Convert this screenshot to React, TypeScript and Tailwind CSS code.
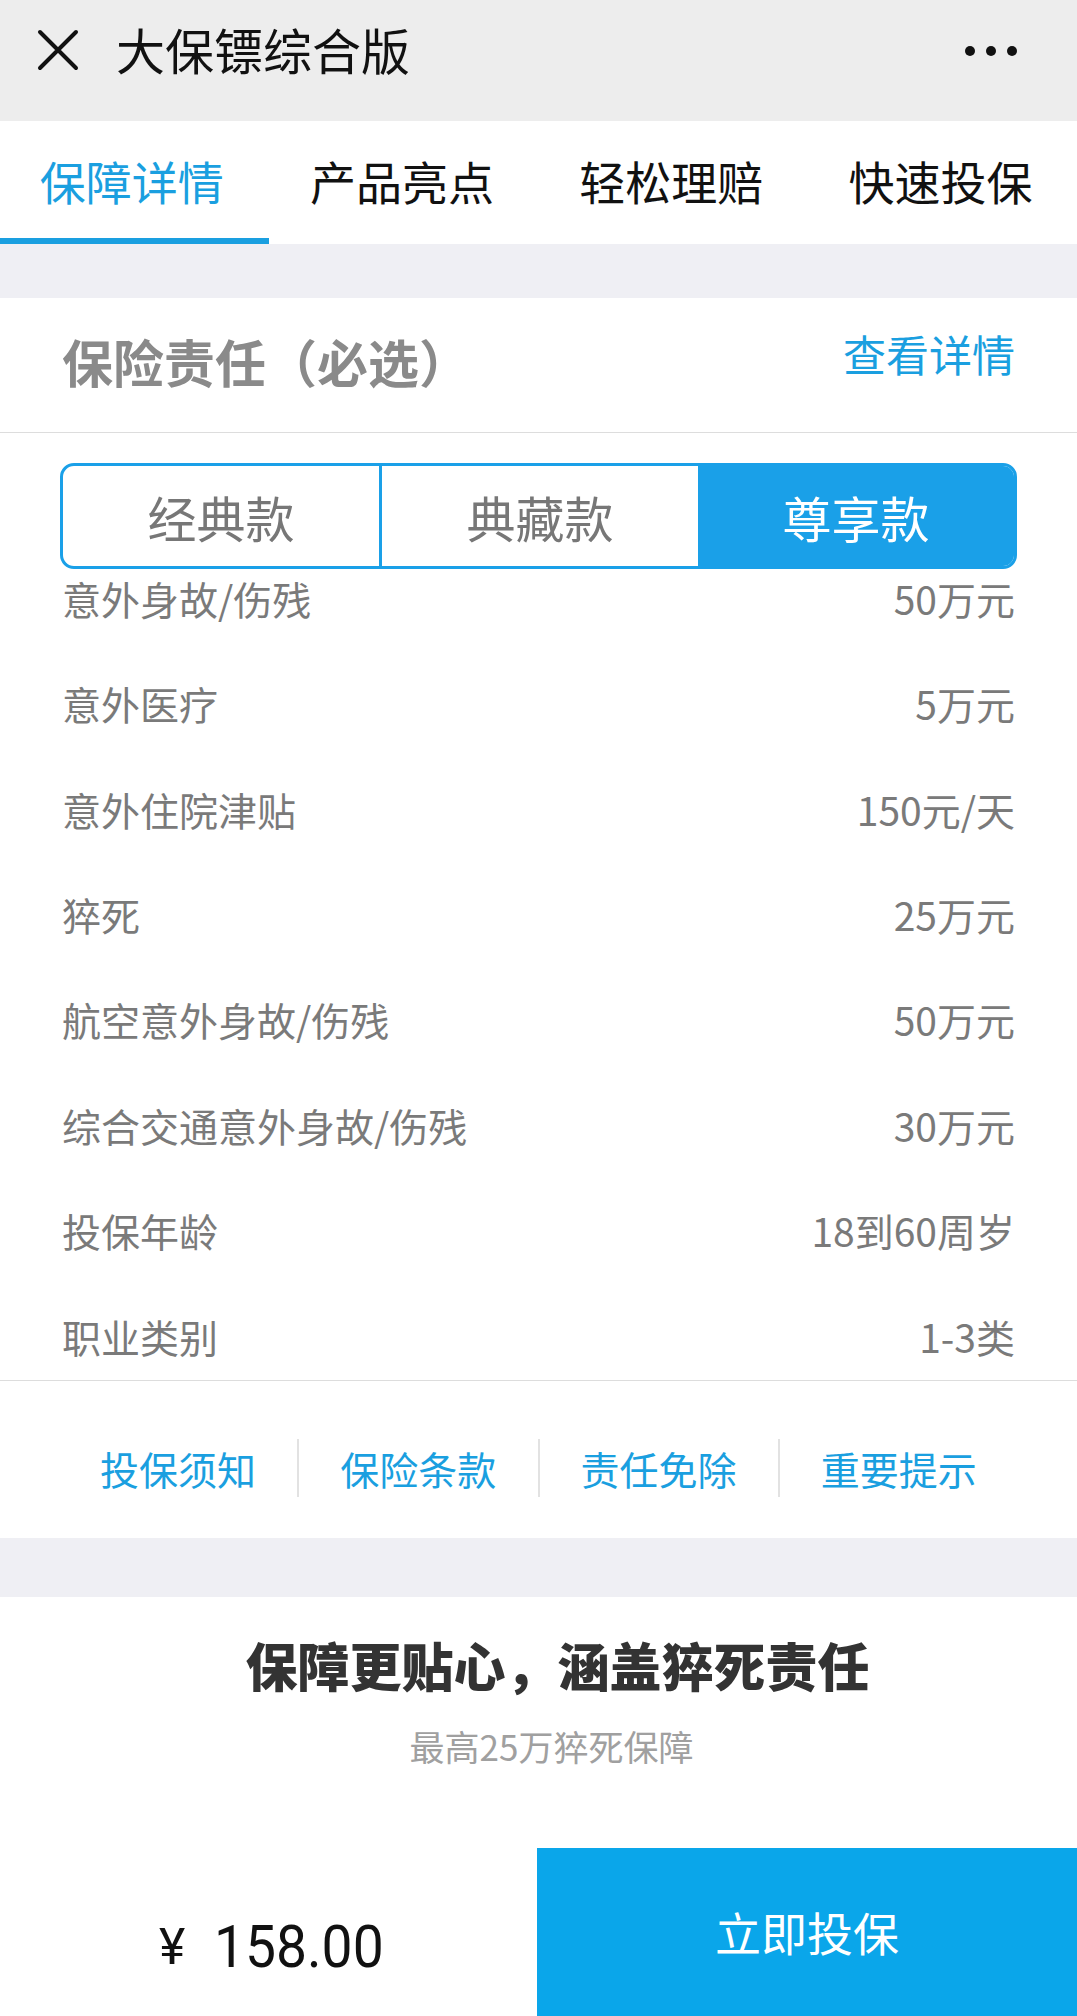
import React from "react";

const rows: [string, string][] = [
  ["意外身故/伤残", "50万元"],
  ["意外医疗", "5万元"],
  ["意外住院津贴", "150元/天"],
  ["猝死", "25万元"],
  ["航空意外身故/伤残", "50万元"],
  ["综合交通意外身故/伤残", "30万元"],
  ["投保年龄", "18到60周岁"],
  ["职业类别", "1-3类"],
];

const tabs = ["保障详情", "产品亮点", "轻松理赔", "快速投保"];
const links = ["投保须知", "保险条款", "责任免除", "重要提示"];

export default function App() {
  return (
    <div
      className="w-[1077px] h-[2016px] bg-white flex flex-col overflow-hidden"
      style={{ fontFamily: '"Noto Sans CJK SC", "Noto Sans", sans-serif' }}
    >
      {/* Header */}
      <div className="h-[121px] bg-[#ededed] flex items-start pl-[37px] pr-[60px]">
        <svg width="42" height="42" viewBox="0 0 42 42" className="shrink-0 mt-[29px]">
          <path d="M3 3 L39 39 M39 3 L3 39" stroke="#111" strokeWidth="4" strokeLinecap="round" />
        </svg>
        <div className="ml-[37px] mt-[24px] text-[49px] leading-none text-[#111]">大保镖综合版</div>
        <div className="ml-auto mt-[46px] flex items-center gap-[11px]">
          <span className="w-[10px] h-[10px] rounded-full bg-[#111]" />
          <span className="w-[10px] h-[10px] rounded-full bg-[#111]" />
          <span className="w-[10px] h-[10px] rounded-full bg-[#111]" />
        </div>
      </div>

      {/* Tabs */}
      <div className="h-[123px] bg-white flex">
        {tabs.map((t, i) => (
          <div key={t} className="flex-1 flex flex-col">
            <div
              className={`flex-1 flex items-center justify-center text-[46px] leading-none pt-[2px] ${
                i === 0 ? "text-[#1a9fe0]" : "text-[#111]"
              }`}
            >
              <span className={i === 0 ? "-ml-[6px]" : "-ml-[4px]"}>{t}</span>
            </div>
            <div className={`h-[6px] ${i === 0 ? "bg-[#1a9fe0]" : "bg-transparent"}`} />
          </div>
        ))}
      </div>

      {/* Gap */}
      <div className="h-[54px] bg-[#efeff4]" />

      {/* Card header */}
      <div className="h-[136px] flex items-center justify-between px-[62px] border-b border-[#dddddd]">
        <div className="text-[51px] font-bold text-[#8a8a8a] leading-none -mt-[6px]">保险责任（必选）</div>
        <div className="text-[43px] text-[#1a9fe0] leading-none -mt-[22px]">查看详情</div>
      </div>

      {/* Segment */}
      <div className="px-[60px] pt-[30px]">
        <div className="h-[106px] flex border-[3px] border-[#1aa0e8] rounded-[14px] overflow-hidden">
          <div className="flex-1 flex items-center justify-center text-[49px] text-[#777] border-r-[3px] border-[#1aa0e8]">经典款</div>
          <div className="flex-1 flex items-center justify-center text-[49px] text-[#777]">典藏款</div>
          <div className="flex-1 flex items-center justify-center text-[49px] text-white bg-[#1aa0e8]">尊享款</div>
        </div>
      </div>

      {/* Rows */}
      <div className="px-[62px] flex flex-col gap-[47.4px] pb-[15px] border-b border-[#dddddd]">
        {rows.map(([k, v]) => (
          <div key={k} className="h-[58px] flex items-center justify-between text-[39px] text-[#7a7a7a] leading-none">
            <span>{k}</span>
            <span>{v}</span>
          </div>
        ))}
      </div>

      {/* Links */}
      <div className="h-[157px] px-[59px] pt-[18px] flex items-center">
        {links.map((l, i) => (
          <div
            key={l}
            className={`flex-1 flex items-center justify-center h-[58px] text-[39px] text-[#1a9fe0] leading-none ${
              i > 0 ? "border-l-2 border-[#e2e2e2]" : ""
            }`}
          >
            {l}
          </div>
        ))}
      </div>

      {/* Gap */}
      <div className="h-[59px] bg-[#efeff4]" />

      {/* Highlight */}
      <div className="h-[252px] flex flex-col items-center">
        <div className="mt-[42px] pl-[38px] text-[52px] font-black text-[#333] leading-none">保障更贴心，涵盖猝死责任</div>
        <div className="mt-[37px] pl-[26px] text-[35px] text-[#a0a0a0] leading-none">最高25万猝死保障</div>
      </div>

      {/* Bottom bar */}
      <div className="h-[168px] flex">
        <div
          className="w-[537px] flex items-center pl-[159px] pt-[30px] text-[#111] leading-none"
          style={{ fontFamily: '"Roboto", "Liberation Sans", sans-serif' }}
        >
          <span className="text-[50px]">¥</span>
          <span className="ml-[29px] text-[60px] scale-x-[0.92] origin-left inline-block">158.00</span>
        </div>
        <div className="flex-1 bg-[#0aa6ea] flex items-center justify-center text-[46px] text-white leading-none pb-[2px]">
          立即投保
        </div>
      </div>
    </div>
  );
}
